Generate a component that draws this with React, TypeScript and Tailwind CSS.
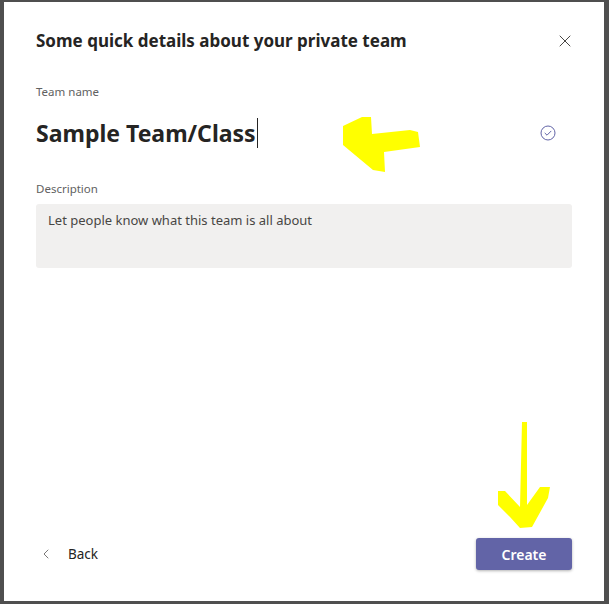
import { ChevronLeft, X } from "lucide-react";

const font = { fontFamily: '"Noto Sans", "Open Sans", sans-serif' };

function CheckCircle() {
  return (
    <svg width="16" height="16" viewBox="0 0 16 16" fill="none" className="text-[#6264a7]">
      <circle cx="8" cy="8" r="7" stroke="currentColor" strokeWidth="1" />
      <path d="M5 8.2l2 2 4-4" stroke="currentColor" strokeWidth="1" strokeLinecap="round" strokeLinejoin="round" />
    </svg>
  );
}

// yellow marker arrows drawn over the dialog
function Annotations() {
  return (
    <svg className="pointer-events-none absolute inset-0" width="609" height="604" viewBox="0 0 609 604">
      <polygon
        fill="#ffff00"
        points="362,117 371,117 372,134 410,130 418,132 420,147 384,152 385,172 373,170 343,145 343,126"
      />
      <polygon
        fill="#ffff00"
        points="522,422 527,422 527,505 540,487 550,487 548,498 532,527 520,528 510,517 498,505 498,491 505,491 520,507"
      />
    </svg>
  );
}

export default function App() {
  return (
    <div className="relative h-[604px] w-[609px] bg-[#4f4f4f] pb-[3px] pl-[4px] pr-[5px] pt-[2px]" style={font}>
      <div className="flex h-full flex-col bg-white px-8 pb-[31px] pt-[27px]">
        <div className="flex items-center justify-between">
          <h1 className="text-[17px] font-bold leading-6 text-[#252423]">Some quick details about your private team</h1>
          <X className="-mr-[3px] h-5 w-5 text-[#484644]" strokeWidth={1.2} />
        </div>

        <label className="mt-[31px] text-[11.5px] leading-4 text-[#616161]">Team name</label>
        <div className="mt-[17px] flex items-center justify-between">
          <div className="flex items-center">
            <span className="text-[23px] font-bold leading-8 text-[#252423]">Sample Team/Class</span>
            <span className="ml-[1px] h-[30px] w-px bg-[#252423]" />
          </div>
          <div className="mr-4">
            <CheckCircle />
          </div>
        </div>

        <label className="mt-8 text-[11.5px] leading-4 text-[#616161]">Description</label>
        <div className="mt-[7px] h-16 rounded-[3px] bg-[#f1f0ef] px-3 pt-[6px] text-[13px] leading-5 text-[#484644]">
          Let people know what this team is all about
        </div>

        <div className="mt-auto flex items-center justify-between">
          <div className="flex items-center gap-[14px] pl-[2px] text-[13.5px] text-[#252423]">
            <ChevronLeft className="h-4 w-4 text-[#484644]" strokeWidth={1.1} />
            <span>Back</span>
          </div>
          <button className="h-8 w-24 rounded-[3px] bg-[#6264a7] text-[14px] font-semibold text-white shadow-[0_1px_3px_rgba(0,0,0,0.3)]">
            Create
          </button>
        </div>
      </div>
      <Annotations />
    </div>
  );
}
